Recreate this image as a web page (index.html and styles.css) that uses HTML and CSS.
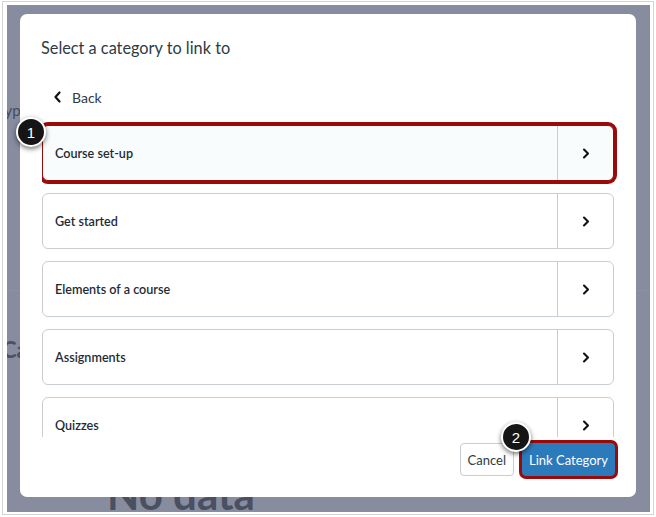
FILE: index.html
```html
<!DOCTYPE html>
<html lang="en">
<head>
<meta charset="utf-8">
<title>Select a category to link to</title>
<link rel="stylesheet" href="styles.css">
</head>
<body>
<div class="frame">
  <div class="screen">
    <div class="page">
      <div class="page-type">Type</div>
      <div class="page-rule"></div>
      <div class="page-heading">Ca</div>
      <div class="page-nodata">No data</div>
    </div>

    <div class="modal" role="dialog" aria-label="Select a category to link to">
      <h2 class="modal-title">Select a category to link to</h2>
      <div class="back">
        <svg class="back-icon" width="9" height="12" viewBox="0 0 9 12"><path d="M6.5 1.5 L2.5 6 L6.5 10.5" fill="none" stroke="#111" stroke-width="2.2" stroke-linecap="round" stroke-linejoin="round"/></svg>
        <span>Back</span>
      </div>
      <div class="list">
        <div class="row row-active">
          <div class="row-label">Course set-up</div>
          <div class="row-go"><svg width="8" height="11" viewBox="0 0 8 11"><path d="M2 1.5 L6 5.5 L2 9.5" fill="none" stroke="#111" stroke-width="2.1" stroke-linecap="round" stroke-linejoin="round"/></svg></div>
        </div>
        <div class="row">
          <div class="row-label">Get started</div>
          <div class="row-go"><svg width="8" height="11" viewBox="0 0 8 11"><path d="M2 1.5 L6 5.5 L2 9.5" fill="none" stroke="#111" stroke-width="2.1" stroke-linecap="round" stroke-linejoin="round"/></svg></div>
        </div>
        <div class="row">
          <div class="row-label">Elements of a course</div>
          <div class="row-go"><svg width="8" height="11" viewBox="0 0 8 11"><path d="M2 1.5 L6 5.5 L2 9.5" fill="none" stroke="#111" stroke-width="2.1" stroke-linecap="round" stroke-linejoin="round"/></svg></div>
        </div>
        <div class="row">
          <div class="row-label">Assignments</div>
          <div class="row-go"><svg width="8" height="11" viewBox="0 0 8 11"><path d="M2 1.5 L6 5.5 L2 9.5" fill="none" stroke="#111" stroke-width="2.1" stroke-linecap="round" stroke-linejoin="round"/></svg></div>
        </div>
        <div class="row">
          <div class="row-label">Quizzes</div>
          <div class="row-go"><svg width="8" height="11" viewBox="0 0 8 11"><path d="M2 1.5 L6 5.5 L2 9.5" fill="none" stroke="#111" stroke-width="2.1" stroke-linecap="round" stroke-linejoin="round"/></svg></div>
        </div>
      </div>
      <div class="footer">
        <button class="btn btn-cancel">Cancel</button>
        <button class="btn btn-primary">Link Category</button>
      </div>
    </div>

    <div class="badge badge-1">1</div>
    <div class="badge badge-2">2</div>
  </div>
</div>
</body>
</html>
```

FILE: styles.css
```css
* { box-sizing: border-box; }

html, body {
  margin: 0;
  padding: 0;
  background: #ffffff;
}

body {
  font-family: Lato, "Noto Sans", "Liberation Sans", sans-serif;
  color: #2d3b45;
}

.frame {
  margin: 1px 0 0 2px;
  width: 652px;
  height: 514px;
  border: 1px solid #d4d4d4;
  padding: 3px 3px 2px 4px;
  background: #ffffff;
}

.screen {
  position: relative;
  width: 643px;
  height: 507px;
  background: #878c9e;
  overflow: hidden;
}

/* dimmed page behind the overlay */
.page {
  display: flex;
  flex-direction: column;
  color: #444b5b;
}

.page-type {
  margin: 96px 0 0 -10px;
  font-size: 15px;
  line-height: 18px;
}

.page-rule {
  margin-top: 171px;
  height: 1px;
  background: #8e93a4;
}

.page-heading {
  margin: 46px 0 0 -5px;
  font-size: 22px;
  font-weight: 700;
  line-height: 26px;
  color: #4a5162;
}

.page-nodata {
  margin: 107px 0 0 100px;
  font-size: 42px;
  font-weight: 700;
  line-height: 48px;
  color: #4a5062;
}

/* modal */
.modal {
  position: absolute;
  left: 13px;
  top: 9px;
  width: 616px;
  height: 483px;
  background: #ffffff;
  border-radius: 7px;
  display: flex;
  flex-direction: column;
  padding: 0 22px;
}

.modal-title {
  margin: 23px 0 0 -1px;
  font-size: 16.3px;
  line-height: 22px;
  font-weight: 400;
  color: #2d3b45;
}

.back {
  margin-top: 26px;
  height: 24px;
  display: flex;
  align-items: center;
  gap: 10px;
  padding-left: 11px;
  font-size: 14px;
  color: #2d3b45;
}

.back-icon { display: block; }

.list {
  margin-top: 6px;
  margin-right: -3px;
  padding-right: 3px;
  height: 322px;
  overflow: hidden;
  padding-top: 10px;
  display: flex;
  flex-direction: column;
  gap: 12px;
}

.row {
  flex: 0 0 56px;
  height: 56px;
  display: flex;
  border: 1px solid #c7cdd1;
  border-radius: 6px;
  background: #ffffff;
}

.row-active {
  background: #f8fcfd;
  border-color: #9a0a0a;
  box-shadow: 0 0 0 3px #9a0a0a;
}

.row-label {
  flex: 1;
  display: flex;
  align-items: center;
  padding-left: 12px;
  font-size: 12.6px;
  font-weight: 600;
  color: #1f2b33;
}

.row-go {
  flex: 0 0 56px;
  display: flex;
  align-items: center;
  justify-content: center;
  border-left: 1px solid #c7cdd1;
}

.row-go svg { display: block; }

.footer {
  margin-top: 6px;
  margin-right: -1px;
  display: flex;
  justify-content: flex-end;
  align-items: center;
  gap: 8px;
}

.btn {
  font-family: Lato, "Noto Sans", "Liberation Sans", sans-serif;
  font-size: 13px;
  height: 33px;
  border-radius: 4px;
  padding: 0 7px;
  cursor: pointer;
}

.btn-cancel {
  background: #ffffff;
  color: #2d3b45;
  border: 1px solid #c7cdd1;
}

.btn-primary {
  background: #2b7abc;
  color: #ffffff;
  border: 1px solid #2b7abc;
  box-shadow: 0 0 0 3px #9a0a0a;
  padding: 0 6px;
}

/* annotation badges */
.badge {
  position: absolute;
  width: 30px;
  height: 30px;
  border-radius: 50%;
  background: #151515;
  border: 2px solid #ffffff;
  box-shadow: 0 2px 5px rgba(0, 0, 0, 0.55);
  color: #ffffff;
  font-family: "Liberation Sans", Arial, sans-serif;
  font-size: 15px;
  display: flex;
  align-items: center;
  justify-content: center;
}

.badge-1 { left: 9px; top: 112px; }
.badge-2 { left: 494px; top: 417px; }
```
